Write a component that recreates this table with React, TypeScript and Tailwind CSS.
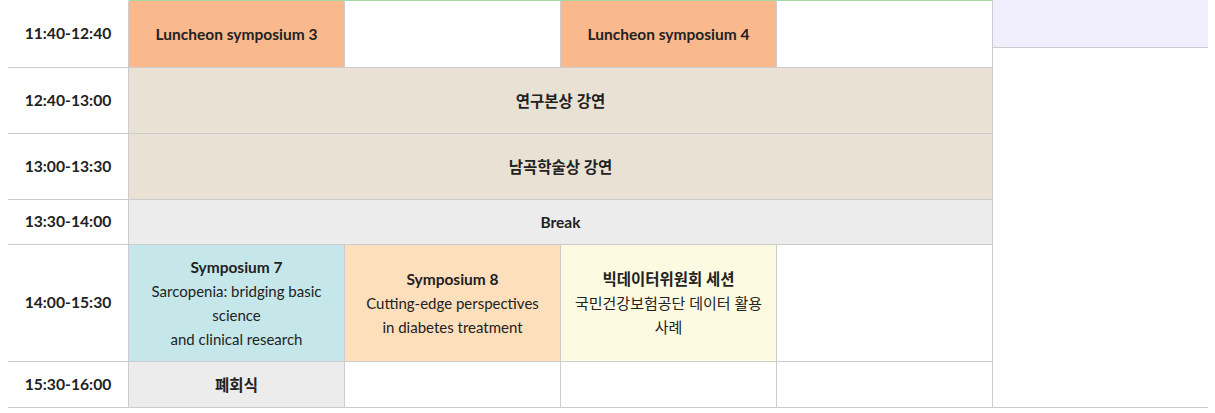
const font = "font-['Lato','Noto_Sans_CJK_KR',sans-serif]";

type Cell = {
  span?: number;
  bg?: string;
  title?: string;
  lines?: string[];
};

type Row = {
  time: string;
  cells: Cell[];
};

const rows: Row[] = [
  {
    time: "11:40-12:40",
    cells: [
      { bg: "bg-[#f9b98c]", title: "Luncheon symposium 3" },
      {},
      { bg: "bg-[#f9b98c]", title: "Luncheon symposium 4" },
      {},
    ],
  },
  { time: "12:40-13:00", cells: [{ span: 4, bg: "bg-[#e9e2d4]", title: "연구본상 강연" }] },
  { time: "13:00-13:30", cells: [{ span: 4, bg: "bg-[#e9e2d4]", title: "남곡학술상 강연" }] },
  { time: "13:30-14:00", cells: [{ span: 4, bg: "bg-[#ececec]", title: "Break" }] },
  {
    time: "14:00-15:30",
    cells: [
      {
        bg: "bg-[#c6e7ea]",
        title: "Symposium 7",
        lines: ["Sarcopenia: bridging basic science", "and clinical research"],
      },
      {
        bg: "bg-[#fedfbb]",
        title: "Symposium 8",
        lines: ["Cutting-edge perspectives", "in diabetes treatment"],
      },
      {
        bg: "bg-[#fdfae2]",
        title: "빅데이터위원회 세션",
        lines: ["국민건강보험공단 데이터 활용 사례"],
      },
      {},
    ],
  },
  {
    time: "15:30-16:00",
    cells: [{ bg: "bg-[#ececec]", title: "폐회식" }, {}, {}, {}],
  },
];

const spanClass: Record<number, string> = {
  1: "col-span-1",
  4: "col-span-4",
};

export default function App() {
  return (
    <div className={`${font} bg-white text-[#222] px-2 w-[1215px] h-[413px]`}>
      <div className="flex items-start w-[1200px] border-b border-[#ccc]">
        <div className="grid grid-cols-[121px_216px_216px_216px_216px] grid-rows-[68px_66px_66px_45px_117px_45px] w-[985px]">
          {rows.map((row, ri) => (
            <div key={row.time} className="contents">
              <div
                className={`flex items-center justify-center border-r border-[#ccc] text-[15.7px] font-bold ${
                  ri === 0 ? "border-t border-t-white" : ""
                } ${ri === rows.length - 1 ? "" : "border-b"}`}
              >
                {row.time}
              </div>
              {row.cells.map((cell, ci) => (
                <div
                  key={ci}
                  className={`${spanClass[cell.span ?? 1]} ${cell.bg ?? "bg-white"} flex flex-col items-center justify-center text-center px-2.5 border-r border-[#ccc] text-[15px] leading-6 ${
                    ri === 0 ? "border-t border-t-[#a8d8a0]" : ""
                  } ${ri === rows.length - 1 ? "" : "border-b"}`}
                >
                  {cell.title && <div className="font-bold text-[15.5px]">{cell.title}</div>}
                  {cell.lines?.map((l) => (
                    <div key={l}>{l}</div>
                  ))}
                </div>
              ))}
            </div>
          ))}
        </div>
        <div className="w-[215px] h-[48px] bg-[#f0eefc] border-b border-[#ccc]" />
      </div>
    </div>
  );
}
